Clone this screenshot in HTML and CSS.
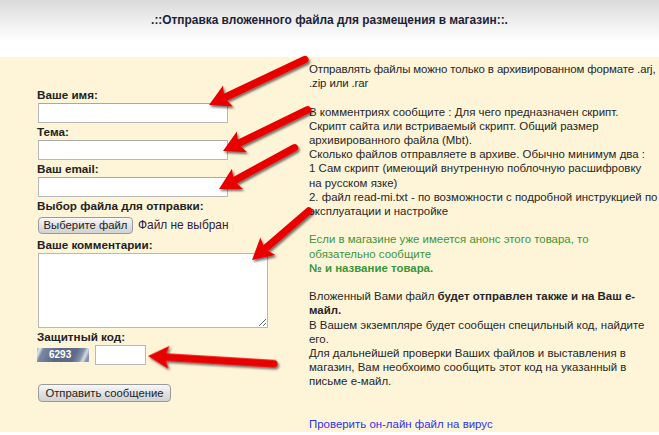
FILE: index.html
```html
<!DOCTYPE html>
<html lang="ru">
<head>
<meta charset="utf-8">
<title>Отправка файла</title>
<link rel="stylesheet" href="styles.css">
</head>
<body>
<div class="header">
  <h1 class="title">.::Отправка вложенного файла для размещения в магазин::.</h1>
</div>
<div class="main">
  <form class="form">
    <label class="lbl">Ваше имя:</label>
    <input class="field" type="text">
    <label class="lbl">Тема:</label>
    <input class="field" type="text">
    <label class="lbl">Ваш email:</label>
    <input class="field" type="text">
    <label class="lbl">Выбор файла для отправки:</label>
    <div class="file-row">
      <button class="btn btn-file" type="button">Выберите файл</button>
      <span class="file-name">Файл не выбран</span>
    </div>
    <label class="lbl lbl-comment">Ваше комментарии:</label>
    <textarea class="comment"></textarea>
    <label class="lbl lbl-code">Защитный код:</label>
    <div class="code-row">
      <div class="captcha">6293</div>
      <input class="code" type="text">
    </div>
    <button class="btn btn-send" type="button">Отправить сообщение</button>
  </form>
  <div class="info">
    <p class="tight">Отправлять файлы можно только в архивированном формате .arj,<br>.zip или .rar</p>
    <p>В комментриях сообщите : Для чего предназначен скрипт.<br>Скрипт сайта или встриваемый скрипт. Общий размер<br>архивированного файла (Mbt).<br>Сколько файлов отправляете в архиве. Обычно минимум два :<br>1 Сам скрипт (имеющий внутренную поблочную расшифровку<br>на русском язке)<br>2. файл read-mi.txt - по возможности с подробной инструкцией по<br>эксплуатации и настройке</p>
    <p class="green">Если в магазине уже имеется анонс этого товара, то<br>обязательно сообщите<br><b>№ и название товара.</b></p>
    <p>Вложенный Вами файл <b>будет отправлен также и на Ваш е-<br>майл.</b><br>В Вашем экземпляре будет сообщен специльный код, найдите<br>его.<br>Для дальнейшей проверки Ваших файлов и выставления в<br>магазин, Вам необхоимо сообщить этот код на указанный в<br>письме е-майл.</p>
    <p class="link-p"><a class="link" href="#">Проверить он-лайн файл на вирус</a></p>
  </div>
</div>
<svg class="arrows" width="659" height="435" viewBox="0 0 659 435">
  <defs>
    <filter id="sh" x="-20%" y="-20%" width="140%" height="140%">
      <feDropShadow dx="1.5" dy="2" stdDeviation="1.3" flood-color="#000" flood-opacity="0.55"/>
    </filter>
    <g id="arrowhead">
      <polygon points="0,0 -21,-11.5 -17,0 -21,11.5" fill="#e80000"/>
    </g>
  </defs>
  <g filter="url(#sh)">
    <g transform="translate(209 105) rotate(154.6)">
      <line x1="-14" y1="0" x2="-106" y2="0" stroke="#e80000" stroke-width="7.5" stroke-linecap="round"/>
      <use href="#arrowhead"/>
    </g>
    <g transform="translate(223 151) rotate(154)">
      <line x1="-14" y1="0" x2="-94" y2="0" stroke="#e80000" stroke-width="7.5" stroke-linecap="round"/>
      <use href="#arrowhead"/>
    </g>
    <g transform="translate(219 189) rotate(151.4)">
      <line x1="-14" y1="0" x2="-86" y2="0" stroke="#e80000" stroke-width="7.5" stroke-linecap="round"/>
      <use href="#arrowhead"/>
    </g>
    <g transform="translate(252 260) rotate(139.2)">
      <line x1="-14" y1="0" x2="-75" y2="0" stroke="#e80000" stroke-width="7.5" stroke-linecap="round"/>
      <use href="#arrowhead"/>
    </g>
    <g transform="translate(148 356) rotate(183.5)">
      <line x1="-14" y1="0" x2="-126" y2="0" stroke="#e80000" stroke-width="7.5" stroke-linecap="round"/>
      <use href="#arrowhead"/>
    </g>
  </g>
</svg>
</body>
</html>
```

FILE: styles.css
```css
html, body {
  margin: 0;
  padding: 0;
}
body {
  width: 659px;
  height: 435px;
  overflow: hidden;
  position: relative;
  font-family: "Liberation Sans", Arial, sans-serif;
  font-size: 12px;
  color: #262626;
  background: #ffffff;
}
.header {
  height: 57px;
  background: linear-gradient(#dadada 0px, #f4f4f4 28px, #ffffff 42px, #ffffff 57px);
  display: flex;
  justify-content: center;
}
.title {
  margin: 0;
  padding-top: 13px;
  font-size: 11.9px;
  line-height: 14px;
  font-weight: bold;
  color: #1e1e38;
}
.main {
  height: 375px;
  background: #fef5d9;
  display: flex;
  padding-left: 37px;
}
.form {
  width: 272px;
  flex: none;
  padding-top: 31px;
  display: flex;
  flex-direction: column;
  align-items: flex-start;
}
.lbl {
  display: block;
  font-weight: bold;
  font-size: 11.7px;
  line-height: 14px;
  color: #222;
}
.field {
  display: block;
  box-sizing: border-box;
  width: 190px;
  height: 20px;
  margin: 1px 0 2px 1px;
  border: 1px solid #b8b8b8;
  border-top-color: #a8a8a8;
  background: #fff;
  padding: 0;
}
.file-row {
  display: flex;
  align-items: center;
  height: 20px;
  margin-top: 2px;
  margin-left: 1px;
  gap: 5px;
}
.btn {
  box-sizing: border-box;
  appearance: none;
  font-family: "Liberation Sans", Arial, sans-serif;
  font-size: 11.3px;
  color: #222;
  background: linear-gradient(#f8f8f8, #dedede 60%, #d2d2d2);
  border: 1px solid #9a9a9a;
  border-radius: 4px;
  padding: 0;
  height: 17px;
  line-height: 15px;
  text-align: center;
}
.btn-file {
  width: 95px;
}
.file-name {
  font-size: 11.9px;
  color: #2a2440;
}
.lbl-comment {
  margin-top: 3px;
}
.comment {
  display: block;
  box-sizing: border-box;
  width: 230px;
  height: 75px;
  margin: 1px 0 0 1px;
  border: 1px solid #b8b8b8;
  background: #fff;
  padding: 0;
  resize: both;
}
.lbl-code {
  margin-top: 2px;
}
.code-row {
  display: flex;
  align-items: center;
  gap: 6px;
  height: 20px;
  margin-top: 1px;
}
.captcha {
  width: 52px;
  height: 14px;
  box-sizing: border-box;
  padding-left: 12px;
  font-size: 10px;
  line-height: 14px;
  font-weight: bold;
  color: #ffffff;
  background: linear-gradient(115deg, #aab4c8 0%, #dfe4ee 6%, #7b88a4 12%, #5a6784 40%, #5f6c89 70%, #8592ad 82%, #d6dbe6 88%, #7f8ca8 95%, #9aa5bd 100%);
}
.code {
  box-sizing: border-box;
  width: 51px;
  height: 20px;
  border: 1px solid #b8b8b8;
  background: #fff;
  padding: 0;
  margin: 0;
}
.btn-send {
  width: 133px;
  height: 18px;
  margin-top: 19px;
  margin-left: 1px;
}
.info {
  padding-top: 5px;
  font-size: 11.45px;
  line-height: 14.2px;
  white-space: nowrap;
  color: #262626;
}
.info p {
  margin: 0 0 14.2px 0;
}
.info .tight {
  letter-spacing: -0.12px;
}
.info .green {
  color: #3a953a;
}
.info .link-p {
  margin-top: 28.4px;
}
.link {
  color: #3030f0;
  text-decoration: none;
}
.arrows {
  position: absolute;
  left: 0;
  top: 0;
  pointer-events: none;
}
```
